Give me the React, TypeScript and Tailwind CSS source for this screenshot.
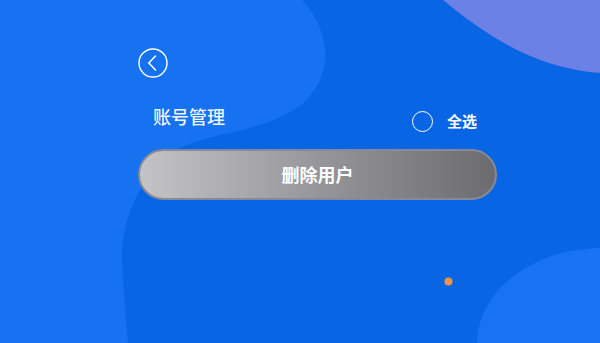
import React from "react";

const FONT = { fontFamily: '"Noto Sans CJK SC", "Noto Sans", sans-serif' };

function Backdrop() {
  return (
    <svg
      className="absolute inset-0 h-full w-full"
      viewBox="0 0 600 343"
      preserveAspectRatio="none"
      aria-hidden="true"
    >
      {/* lighter blob on the left */}
      <path
        d="M0 0 L302 0 C330 30 336 74 302 104 C264 134 212 130 176 150 C142 172 120 220 122 262 C124 300 128 343 128 343 L0 343 Z"
        fill="#1672f0"
      />
      {/* purple wave top right */}
      <path d="M443 0 C480 30 530 68 600 73 L600 0 Z" fill="#6b81e5" />
      {/* round blob bottom right */}
      <path d="M477 343 C477 300 520 250 600 248 L600 343 Z" fill="#1872f4" />
      {/* small orange dot */}
      <circle cx="448.5" cy="281.5" r="4" fill="#f39246" />
    </svg>
  );
}

export default function App() {
  return (
    <div className="relative h-[343px] w-[600px] overflow-hidden bg-[#0865e4]" style={FONT}>
      <Backdrop />

      <div className="relative flex w-[497px] flex-col pl-[138px] pt-[48px]">
        {/* back */}
        <button
          className="flex h-[30px] w-[30px] items-center justify-center"
          aria-label="返回"
        >
          <svg viewBox="0 0 30 30" className="h-[30px] w-[30px]" fill="none">
            <circle cx="15" cy="15" r="14" stroke="white" strokeWidth="1.4" />
            <path
              d="M17.5 8 L10.8 15 L17.5 22"
              stroke="white"
              strokeWidth="1.5"
              strokeLinecap="round"
              strokeLinejoin="round"
            />
          </svg>
        </button>

        {/* title row */}
        <div className="mt-[26px] flex h-[34px] items-center justify-between pl-[15px] pr-[20px]">
          <span className="self-start text-[18px] font-medium leading-[24px] text-white/95">账号管理</span>
          <label className="flex items-center gap-[14px]">
            <span className="h-[21px] w-[21px] rounded-full border-[1.5px] border-white" />
            <span className="text-[15px] font-bold leading-[20px] text-white">全选</span>
          </label>
        </div>

        {/* delete */}
        <button className="mt-[11px] flex h-[51px] w-[359px] items-center justify-center rounded-full border-2 border-[#878a96] bg-linear-to-r from-[#c4c3c6] to-[#6c6b6f]">
          <span className="-mt-[2px] text-[18px] font-bold leading-none text-white">删除用户</span>
        </button>
      </div>
    </div>
  );
}
